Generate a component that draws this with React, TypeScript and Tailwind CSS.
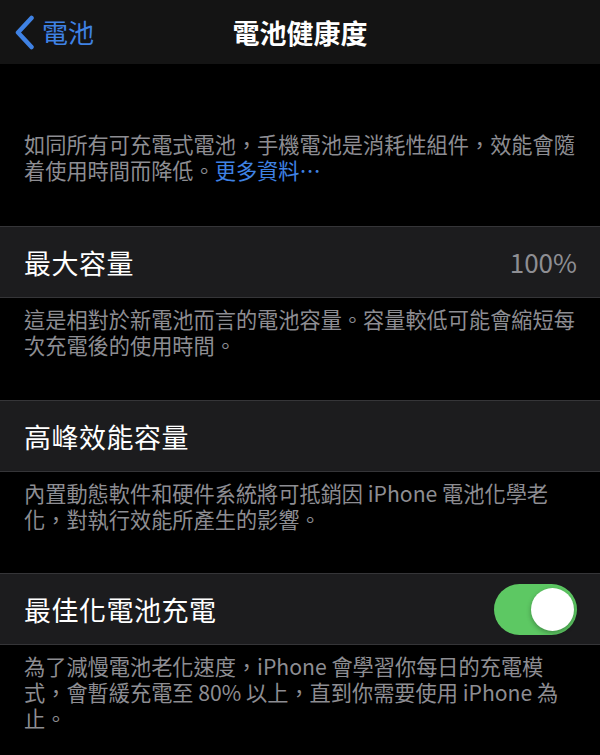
import React from "react";

const font = { fontFamily: '"Noto Sans CJK TC", "Noto Sans", sans-serif' };

function Row({ title, right }: { title: string; right?: React.ReactNode }) {
  return (
    <div className="h-[72px] bg-[#1c1c1e] border-y border-[#353538] flex items-center justify-between pl-6 pr-[23px]">
      <span className="text-[27px] text-white leading-none tracking-[0.5px]">{title}</span>
      {right}
    </div>
  );
}

function Footer({ lines, pb }: { lines: React.ReactNode[]; pb: string }) {
  return (
    <div className={`px-6 pt-[8px] ${pb} text-[21.2px] leading-[26px] text-[#8d8d92]`}>
      {lines.map((l, i) => (
        <div key={i} className="whitespace-nowrap">
          {l}
        </div>
      ))}
    </div>
  );
}

export default function App() {
  return (
    <div className="w-[600px] h-[755px] bg-black overflow-hidden" style={font}>
      <div className="h-[64px] bg-[#141414] grid grid-cols-[1fr_auto_1fr] items-center">
        <div className="flex items-center pl-[14px] gap-[7px] text-[#3f82e4]">
          <svg width="21" height="35" viewBox="0 0 21 35" fill="none">
            <path d="M17.5 3 L4 17.5 L17.5 32" stroke="#3f82e4" strokeWidth="4.5" strokeLinecap="round" strokeLinejoin="round" />
          </svg>
          <span className="text-[26px] leading-none">電池</span>
        </div>
        <div className="text-[27px] font-semibold text-white leading-none">電池健康度</div>
        <div />
      </div>

      <div className="px-6 pt-[67px] pb-[43px] text-[21.2px] leading-[26px] text-[#8d8d92]">
        <div className="whitespace-nowrap">如同所有可充電式電池，手機電池是消耗性組件，效能會隨</div>
        <div className="whitespace-nowrap">
          着使用時間而降低。<span className="text-[#3f82e4]">更多資料…</span>
        </div>
      </div>

      <Row title="最大容量" right={<span className="text-[26px] text-[#8e8e93] leading-none">100%</span>} />
      <Footer
        pb="pb-[42px]"
        lines={["這是相對於新電池而言的電池容量。容量較低可能會縮短每", "次充電後的使用時間。"]}
      />

      <Row title="高峰效能容量" />
      <Footer
        pb="pb-[41px]"
        lines={["內置動態軟件和硬件系統將可抵銷因 iPhone 電池化學老", "化，對執行效能所產生的影響。"]}
      />

      <Row
        title="最佳化電池充電"
        right={
          <div className="w-[83px] h-[51px] rounded-full bg-[#5dc863] relative">
            <div className="absolute right-[3px] top-[4px] w-[43px] h-[43px] rounded-full bg-white shadow-[0_2px_5px_rgba(0,0,0,0.3)]" />
          </div>
        }
      />
      <Footer
        pb="pb-[20px]"
        lines={[
          "為了減慢電池老化速度，iPhone 會學習你每日的充電模",
          "式，會暫緩充電至 80% 以上，直到你需要使用 iPhone 為",
          "止。",
        ]}
      />
    </div>
  );
}
